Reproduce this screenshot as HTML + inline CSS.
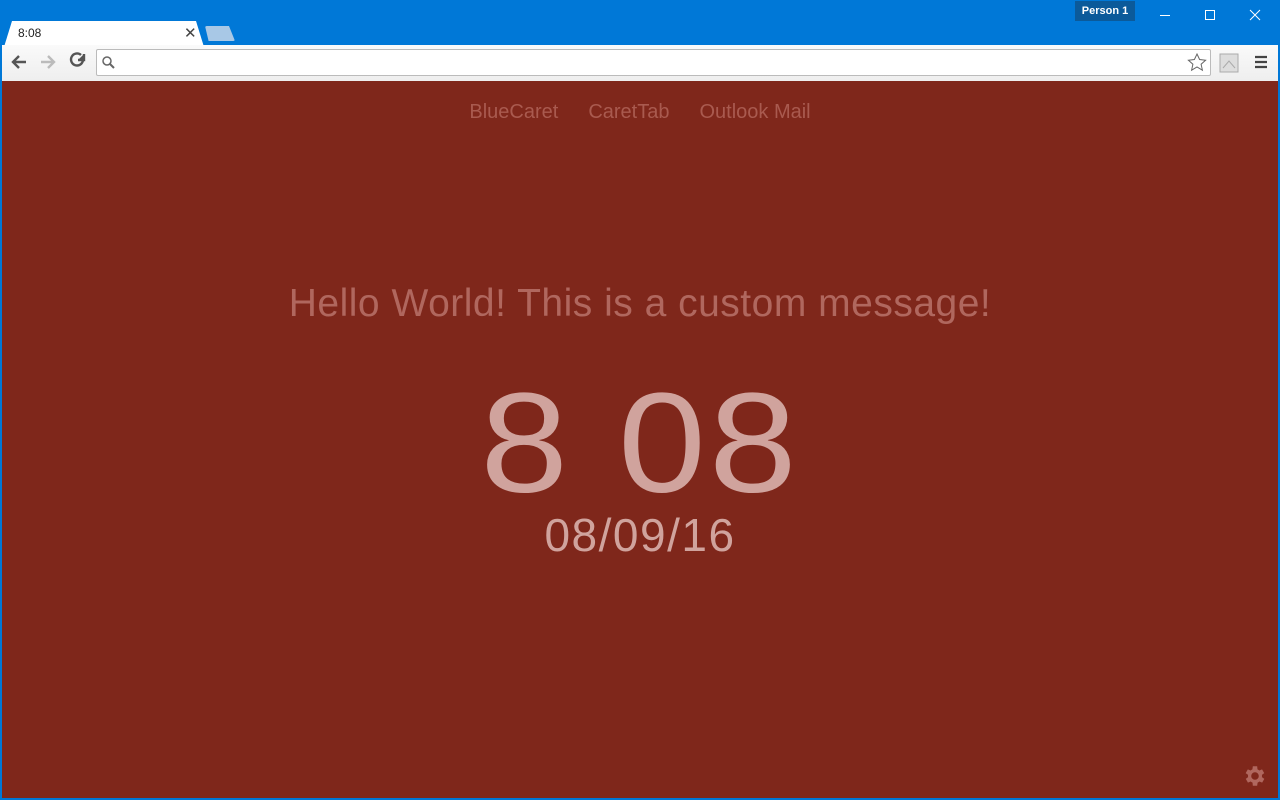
<!DOCTYPE html>
<html><head><style>
*{margin:0;padding:0;box-sizing:border-box}
body{width:1280px;height:800px;overflow:hidden;background:#0078d7;font-family:"Liberation Sans",sans-serif;position:relative}
.tab{position:absolute;left:4px;top:21px;width:200px;height:26px;background:#fff;clip-path:polygon(4% 0,96% 0,100% 100%,0 100%);border-radius:3px 3px 0 0}
.tab span{position:absolute;left:14px;top:5px;font-size:12px;color:#222}
.tab b{position:absolute;left:180px;top:3px;font-size:15px;font-weight:normal;color:#444}
.nt{position:absolute;left:205px;top:26px;width:30px;height:15px;background:#a8c8e6;clip-path:polygon(0 0,80% 0,100% 100%,12% 100%);border-radius:2px}
.person{position:absolute;left:1075px;top:1px;width:60px;height:20px;background:#0b5a9a;color:#fff;font-size:11px;font-weight:bold;text-align:center;line-height:20px}
.toolbar{position:absolute;left:0;top:45px;width:1280px;height:36px;background:linear-gradient(#fafafa,#eee);border-left:2px solid #0078d7;border-right:2px solid #0078d7}
.omni{position:absolute;left:96px;top:49px;width:1115px;height:27px;background:#fff;border:1px solid #bbb;border-radius:2px}
.page{position:absolute;left:2px;top:81px;width:1276px;height:717px;background:#7f271b;color:#a95a4f;text-align:center}
.nav{position:absolute;top:20px;width:100%;font-size:20px}
.nav span{margin:0 15px}
.msg{position:absolute;top:201px;width:100%;font-size:39px;color:#b0675e;letter-spacing:.5px}
.clk{position:absolute;top:272px;width:100%;font-size:158px;color:#d0a39d;letter-spacing:3px;transform:scaleY(.9);transform-origin:50% 50%}
.date{position:absolute;top:427px;width:100%;font-size:46px;color:#d0a39d;letter-spacing:1.5px}
</style></head><body>
<div class="tab"><span>8:08</span><b>✕</b></div><div class="nt"></div>
<div class="person">Person 1</div>
<svg style="position:absolute;left:1150px;top:0" width="130" height="30"><g stroke="#fff" stroke-width="1" fill="none"><path d="M10 15.5h10"/><rect x="55.5" y="10.5" width="9" height="9"/><path d="M100 10l10 10M110 10l-10 10"/></g></svg>
<div class="toolbar"></div>
<svg style="position:absolute;left:0;top:45px" width="96" height="36"><g fill="none" stroke-width="2.4"><path d="M26 17H13M19 11l-6 6 6 6" stroke="#555"/><path d="M41 17h13M48 11l6 6-6 6" stroke="#bbb"/><path d="M83 15a6 6 0 1 1-2-5" stroke="#555"/><path d="M84 9v6h-6" stroke="#555" fill="#555"/></g></svg>
<div class="omni"><svg width="20" height="25"><circle cx="10" cy="11" r="4" fill="none" stroke="#666" stroke-width="1.5"/><path d="M13 14l4 4" stroke="#666" stroke-width="2"/></svg></div>
<svg style="position:absolute;left:1185px;top:50px" width="95" height="26"><path d="M12 4l2.6 5.5 6 .7-4.5 4 1.3 6L12 17l-5.4 3.2 1.3-6-4.5-4 6-.7z" fill="none" stroke="#666"/><rect x="35" y="4" width="18" height="18" fill="#ddd" stroke="#aaa"/><path d="M38 18l6-7 6 7" fill="none" stroke="#aaa"/><path d="M70 7h12M70 12h12M70 17h12" stroke="#444" stroke-width="2.2"/></svg>
<div class="page">
<div class="nav"><span>BlueCaret</span><span>CaretTab</span><span>Outlook Mail</span></div>
<div class="msg">Hello World! This is a custom message!</div>
<div class="clk">8 08</div>
<div class="date">08/09/16</div>
<svg style="position:absolute;left:1240px;top:682px" width="26" height="26" viewBox="0 0 24 24"><path fill="#b0675e" d="M19.4 13a7.5 7.5 0 0 0 0-2l2.1-1.6-2-3.5-2.5 1a7 7 0 0 0-1.7-1L15 3h-4l-.4 2.9a7 7 0 0 0-1.7 1l-2.5-1-2 3.5L6.6 11a7.5 7.5 0 0 0 0 2l-2.1 1.6 2 3.5 2.5-1a7 7 0 0 0 1.7 1L11 21h4l.4-2.9a7 7 0 0 0 1.7-1l2.5 1 2-3.5zM13 15.5a3.5 3.5 0 1 1 0-7 3.5 3.5 0 0 1 0 7z" transform="translate(-1 0)"/></svg>
</div>
</body></html>
